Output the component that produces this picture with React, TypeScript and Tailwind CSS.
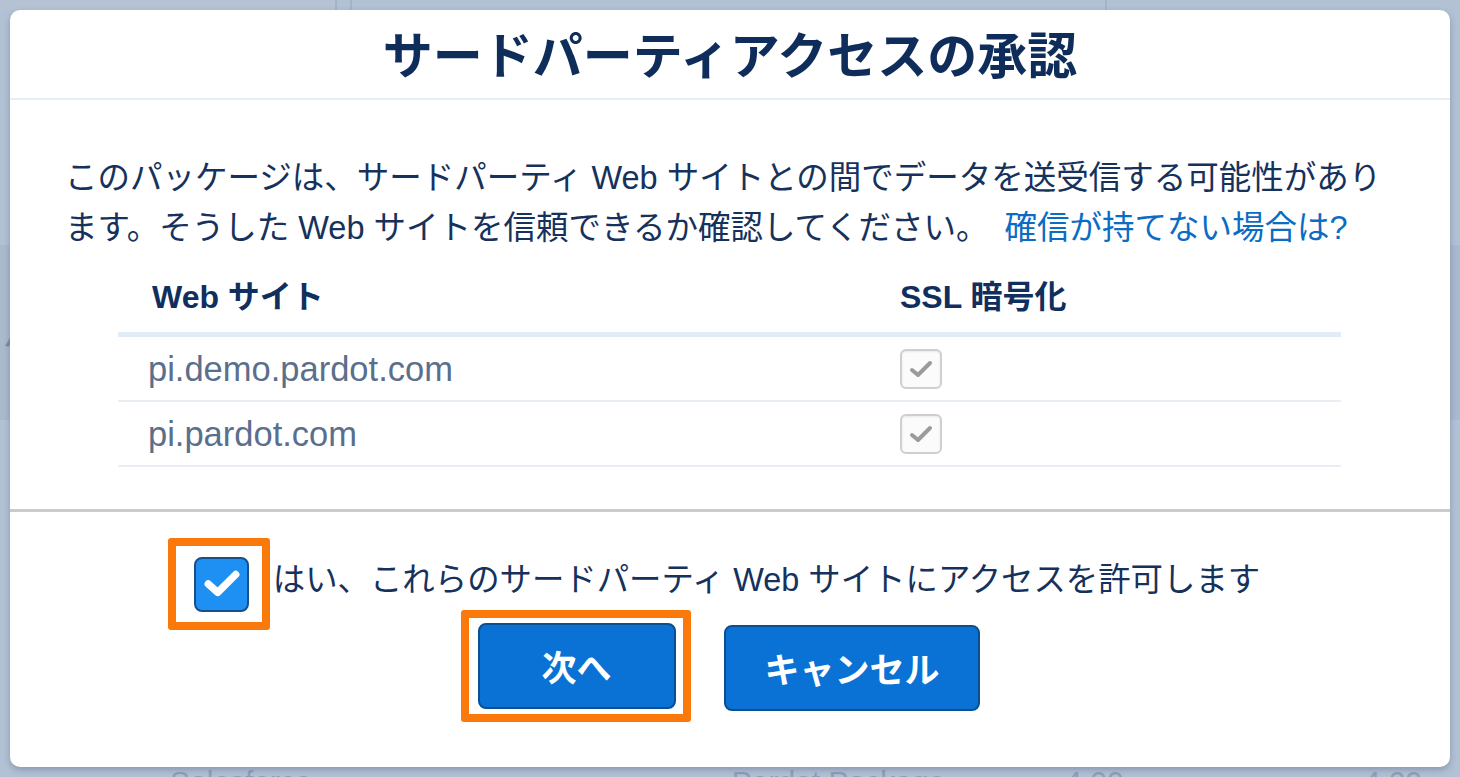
import React from "react";

const FONT = { fontFamily: '"Liberation Sans", "Noto Sans CJK JP", sans-serif' };

function DisabledCheck() {
  return (
    <div className="w-[42px] h-[40px] rounded-[6px] border-2 border-[#cfcfcf] bg-[#fbfbfb] flex items-center justify-center shadow-[inset_0_1px_2px_rgba(0,0,0,0.08)]">
      <svg width="24" height="20" viewBox="0 0 24 20">
        <path d="M3 11 L9 16 L21 4" fill="none" stroke="#9b9b9b" strokeWidth="4" strokeLinecap="round" strokeLinejoin="round" />
      </svg>
    </div>
  );
}

export default function App() {
  return (
    <div className="relative w-[1460px] h-[777px] overflow-hidden bg-[#b2c1d4]" style={FONT}>
      {/* backdrop */}
      <div className="flex flex-col h-full">
        <div className="h-[10px] flex">
          <div className="w-[335px] bg-[#b4c2d4]" />
          <div className="w-[2px] bg-[#a3b3c8]" />
          <div className="w-[13px]" />
          <div className="w-[2px] bg-[#a3b3c8]" />
          <div className="flex-1" />
          <div className="w-[2px] bg-[#a3b3c8] mr-[353px]" />
        </div>
        <div className="h-[235px]" />
        <div className="h-[175px] bg-[#a9b9ce] flex items-center pl-[2px] text-[#7d90ab] text-[40px]">
          <span>ハ</span>
        </div>
        <div className="flex-1" />
        <div className="h-[10px] flex text-[#909fb5] text-[30px] leading-[30px] items-start">
          <span className="ml-[170px]">Salesforce</span>
          <span className="ml-[420px]">Pardot Package</span>
          <span className="ml-[120px]">4.00</span>
          <span className="ml-[240px]">4.00</span>
        </div>
      </div>

      {/* modal */}
      <div className="absolute left-[10px] top-[10px] w-[1440px] h-[757px] bg-white rounded-[10px] shadow-[0_3px_6px_rgba(60,80,110,0.35)] flex flex-col overflow-hidden">
        <div className="h-[90px] border-b-2 border-[#e6eef6] flex items-center justify-center">
          <h1 className="text-[50px] leading-[56px] font-bold text-[#0f2d5a] mt-[-4px]" style={{ fontFamily: '"Noto Sans CJK JP", sans-serif' }}>
            サードパーティアクセスの承認
          </h1>
        </div>

        <div className="h-[409px] flex flex-col pt-[53px] pl-[55px] pr-[55px]">
          <p className="text-[32.5px] leading-[50px] text-[#16325c]">
            このパッケージは、サードパーティ Web サイトとの間でデータを送受信する可能性があります。そうした Web サイトを信頼できるか確認してください。
            <span className="ml-[16px] text-[#0b6cc4]">確信が持てない場合は?</span>
          </p>
          <div className="ml-[53px] w-[1223px] mt-[8px]">
            <div className="h-[76px] flex items-center border-b-[5px] border-[#e2ecf7] text-[32px] font-bold text-[#112f5e]">
              <div className="w-[782px] pl-[34px]">Web サイト</div>
              <div>SSL 暗号化</div>
            </div>
            <div className="h-[65px] flex items-center border-b-2 border-[#e9eef4] text-[34.5px] text-[#5b6f8c]">
              <div className="w-[782px] pl-[30px] pt-[2px]">pi.demo.pardot.com</div>
              <DisabledCheck />
            </div>
            <div className="h-[65px] flex items-center border-b-2 border-[#e9eef4] text-[34.5px] text-[#5b6f8c]">
              <div className="w-[782px] pl-[30px] pt-[2px]">pi.pardot.com</div>
              <DisabledCheck />
            </div>
          </div>
        </div>

        <div className="h-[3px] bg-[#cbcbcb]" />

        <div className="flex-1 flex flex-col items-center pt-[26px]">
          <div className="flex items-center ml-[-32px]">
            <div className="w-[102px] h-[92px] rounded-[3px] border-[8px] border-[#fb780a] flex items-center justify-center pl-[6px]">
              <div className="w-[55px] h-[55px] rounded-[8px] bg-[#1e8ff3] border-2 border-[#1a4f86] flex items-center justify-center">
                <svg width="38" height="32" viewBox="0 0 36 30">
                  <path d="M5 15 L14 23 L31 6" fill="none" stroke="#ffffff" strokeWidth="7" strokeLinecap="round" strokeLinejoin="round" />
                </svg>
              </div>
            </div>
            <span className="ml-[3px] text-[32.4px] leading-[40px] text-[#16325c] mt-[-8px]">
              はい、これらのサードパーティ Web サイトにアクセスを許可します
            </span>
          </div>
          <div className="flex items-start mt-[-20px] ml-[-19px]">
            <div className="w-[230px] h-[112px] rounded-[3px] border-[8px] border-[#fb780a] flex items-center justify-center pl-[1px]">
              <button className="w-[198px] h-[86px] rounded-[8px] bg-[#0a72d5] border-2 border-[#0b4f92] text-white text-[35px] font-bold" style={{ fontFamily: '"Noto Sans CJK JP", sans-serif' }}>
                次へ
              </button>
            </div>
            <button className="ml-[33px] mt-[15px] w-[256px] h-[86px] rounded-[8px] bg-[#0a72d5] border-2 border-[#0b4f92] text-white text-[35px] font-bold" style={{ fontFamily: '"Noto Sans CJK JP", sans-serif' }}>
              キャンセル
            </button>
          </div>
        </div>
      </div>
    </div>
  );
}
